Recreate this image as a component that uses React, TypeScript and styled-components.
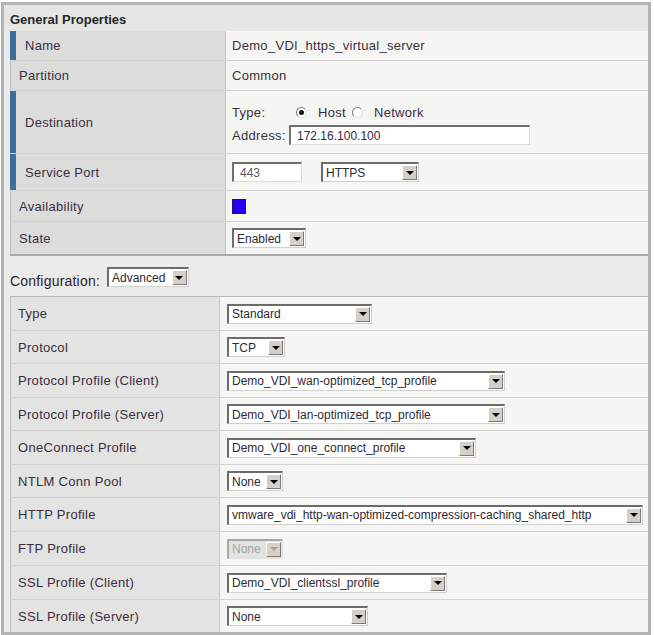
import React from 'react'
import styled, { createGlobalStyle, css } from 'styled-components'

const GlobalStyle = createGlobalStyle`
  html, body {
    margin: 0;
    padding: 0;
    background: #ffffff;
  }
  body {
    font-family: "Liberation Sans", Arial, sans-serif;
    color: #332d37;
  }
`

type Opt = { text: string; w: number; disabled?: boolean }

const configRows: { label: string; h: number; select: Opt }[] = [
  { label: 'Type', h: 34, select: { text: 'Standard', w: 145 } },
  { label: 'Protocol', h: 33, select: { text: 'TCP', w: 58 } },
  { label: 'Protocol Profile (Client)', h: 34, select: { text: 'Demo_VDI_wan-optimized_tcp_profile', w: 278 } },
  { label: 'Protocol Profile (Server)', h: 33, select: { text: 'Demo_VDI_lan-optimized_tcp_profile', w: 278 } },
  { label: 'OneConnect Profile', h: 34, select: { text: 'Demo_VDI_one_connect_profile', w: 249 } },
  { label: 'NTLM Conn Pool', h: 33, select: { text: 'None', w: 56 } },
  { label: 'HTTP Profile', h: 34, select: { text: 'vmware_vdi_http-wan-optimized-compression-caching_shared_http', w: 416 } },
  { label: 'FTP Profile', h: 34, select: { text: 'None', w: 56, disabled: true } },
  { label: 'SSL Profile (Client)', h: 34, select: { text: 'Demo_VDI_clientssl_profile', w: 220 } },
  { label: 'SSL Profile (Server)', h: 33, select: { text: 'None', w: 141 } },
]

const Select = ({ text, w, disabled }: Opt) => (
  <SelectBox $w={w} $disabled={disabled}>
    <SelectText>{text}</SelectText>
    <Arrow $disabled={disabled} />
  </SelectBox>
)

const App = () => {
  return (
    <>
      <GlobalStyle />
      <Frame>
        <Header>General Properties</Header>
        <Table>
          <Row $h={30} $cols={216}>
            <Label $required>Name</Label>
            <Value>Demo_VDI_https_virtual_server</Value>
          </Row>
          <Row $h={30} $cols={216}>
            <Label>Partition</Label>
            <Value>Common</Value>
          </Row>
          <Row $h={63} $cols={216}>
            <Label $required>Destination</Label>
            <DestValue>
              <Line>
                <FieldName $w={64}>Type:</FieldName>
                <Radio $checked />
                <RadioText>Host</RadioText>
                <Radio />
                <RadioText $last>Network</RadioText>
              </Line>
              <Line>
                <FieldName $w={57}>Address:</FieldName>
                <TextInput $w={241}>172.16.100.100</TextInput>
              </Line>
            </DestValue>
          </Row>
          <Row $h={37} $cols={216}>
            <Label $required>Service Port</Label>
            <Value $gap={19}>
              <TextInput $w={70} $muted>443</TextInput>
              <Select text="HTTPS" w={98} />
            </Value>
          </Row>
          <Row $h={31} $cols={216}>
            <Label>Availability</Label>
            <Value>
              <StatusSquare />
            </Value>
          </Row>
          <Row $h={34} $cols={216} $last>
            <Label>State</Label>
            <Value>
              <Select text="Enabled" w={74} />
            </Value>
          </Row>
        </Table>

        <ConfigBar>
          <ConfigText>Configuration:</ConfigText>
          <Select text="Advanced" w={82} />
        </ConfigBar>

        <Table $top>
          {configRows.map((r) => (
            <Row key={r.label} $h={r.h} $cols={210}>
              <Label $config>{r.label}</Label>
              <Value $config>
                <Select {...r.select} />
              </Value>
            </Row>
          ))}
        </Table>
      </Frame>
    </>
  )
}

const Frame = styled.div`
  margin: 2px 0 0 1px;
  width: 644px;
  height: 627px;
  border: 3px solid #b3b3b3;
  background: #ebebe9;
  overflow: hidden;
`

const Header = styled.div`
  height: 26px;
  display: flex;
  align-items: center;
  padding-left: 6px;
  padding-top: 2px;
  box-sizing: border-box;
  font-size: 13px;
  font-weight: 700;
  color: #262626;
  background: #e6e6e4;
`

const Table = styled.div<{ $top?: boolean }>`
  margin-left: 6px;
  ${(p) =>
    p.$top &&
    css`
      border-top: 1px solid #b9b9b9;
    `}
`

const Row = styled.div<{ $h: number; $cols: number; $last?: boolean }>`
  display: grid;
  grid-template-columns: ${(p) => p.$cols}px 1fr;
  height: ${(p) => p.$h}px;
  box-sizing: border-box;
  border-bottom: ${(p) => (p.$last ? '2px solid #a9a9a9' : '1px solid #d2d2d0')};
  font-size: 13px;
  letter-spacing: 0.3px;
`

const Label = styled.div<{ $required?: boolean; $config?: boolean }>`
  display: flex;
  align-items: center;
  box-sizing: border-box;
  background: ${(p) => (p.$config ? '#e3e3e1' : '#dcdcda')};
  border-right: 1px solid #c6c6c4;
  border-left: ${(p) => (p.$required ? '6px solid #3e6d9c' : '1px solid #bdbdbb')};
  padding-left: ${(p) => (p.$required ? 9 : p.$config ? 7 : 8)}px;
  color: #3a2e3f;
`

const Value = styled.div<{ $gap?: number; $config?: boolean }>`
  display: flex;
  align-items: center;
  gap: ${(p) => p.$gap ?? 0}px;
  padding-left: ${(p) => (p.$config ? 7 : 6)}px;
  background: #f5f5f3;
  color: #383239;
`

const DestValue = styled.div`
  display: flex;
  flex-direction: column;
  gap: 4px;
  padding: 12px 0 0 6px;
  background: #f5f5f3;
  color: #383239;
`

const Line = styled.div`
  display: flex;
  align-items: center;
  min-height: 18px;
`

const FieldName = styled.span<{ $w: number }>`
  width: ${(p) => p.$w}px;
  flex-shrink: 0;
`

const Radio = styled.span<{ $checked?: boolean }>`
  position: relative;
  width: 11px;
  height: 11px;
  box-sizing: border-box;
  border-radius: 50%;
  border: 1px solid;
  border-color: #7d7d7d #e2e2e2 #e2e2e2 #7d7d7d;
  background: #ffffff;
  flex-shrink: 0;
  margin-right: 11px;

  ${(p) =>
    p.$checked &&
    css`
      &::after {
        content: '';
        position: absolute;
        left: 2px;
        top: 2px;
        width: 5px;
        height: 5px;
        border-radius: 50%;
        background: #111111;
      }
    `}
`

const RadioText = styled.span<{ $last?: boolean }>`
  margin-right: ${(p) => (p.$last ? 0 : 6)}px;
  color: #3d2c44;
`

const TextInput = styled.div<{ $w: number; $muted?: boolean }>`
  display: flex;
  align-items: center;
  box-sizing: border-box;
  width: ${(p) => p.$w}px;
  height: 20px;
  padding-left: 6px;
  border-style: solid;
  border-width: 2px 1px 1px 2px;
  border-color: #707070 #dcdcdc #dcdcdc #707070;
  background: #ffffff;
  font-size: 12px;
  letter-spacing: 0;
  color: ${(p) => (p.$muted ? '#5a5a5a' : '#3a2448')};
`

const SelectBox = styled.div<{ $w: number; $disabled?: boolean }>`
  display: inline-flex;
  align-items: center;
  box-sizing: border-box;
  width: ${(p) => p.$w}px;
  height: 20px;
  padding: 0 1px 0 3px;
  border-style: solid;
  border-width: 2px 1px 1px 2px;
  border-color: ${(p) =>
    p.$disabled ? '#a8a8a8 #e0e0e0 #e0e0e0 #a8a8a8' : '#6c6c6c #d0d0d0 #d0d0d0 #6c6c6c'};
  background: ${(p) => (p.$disabled ? '#e2e2e2' : '#ffffff')};
  color: ${(p) => (p.$disabled ? '#a4a4a4' : '#2e2a33')};
  font-size: 12px;
  letter-spacing: 0;
`

const SelectText = styled.span`
  flex: 1;
  white-space: nowrap;
  overflow: hidden;
`

const Arrow = styled.span<{ $disabled?: boolean }>`
  display: flex;
  align-items: center;
  justify-content: center;
  box-sizing: border-box;
  width: 15px;
  height: 15px;
  flex-shrink: 0;
  background: #d4d0c8;
  border: 1px solid;
  border-color: #ffffff #7a7a7a #7a7a7a #ffffff;

  &::after {
    content: '';
    border-left: 4px solid transparent;
    border-right: 4px solid transparent;
    border-top: 4px solid ${(p) => (p.$disabled ? '#a0a0a0' : '#000000')};
  }
`

const StatusSquare = styled.span`
  width: 14px;
  height: 15px;
  box-sizing: border-box;
  background: #2200f2;
  border: 1px solid #1a1470;
`

const ConfigBar = styled.div`
  height: 40px;
  box-sizing: border-box;
  display: flex;
  align-items: flex-end;
  gap: 7px;
  padding: 0 0 9px 6px;
`

const ConfigText = styled.span`
  font-size: 14px;
  letter-spacing: 0.2px;
  line-height: 1;
  margin-bottom: -1px;
  color: #2a2230;
`

export default App
